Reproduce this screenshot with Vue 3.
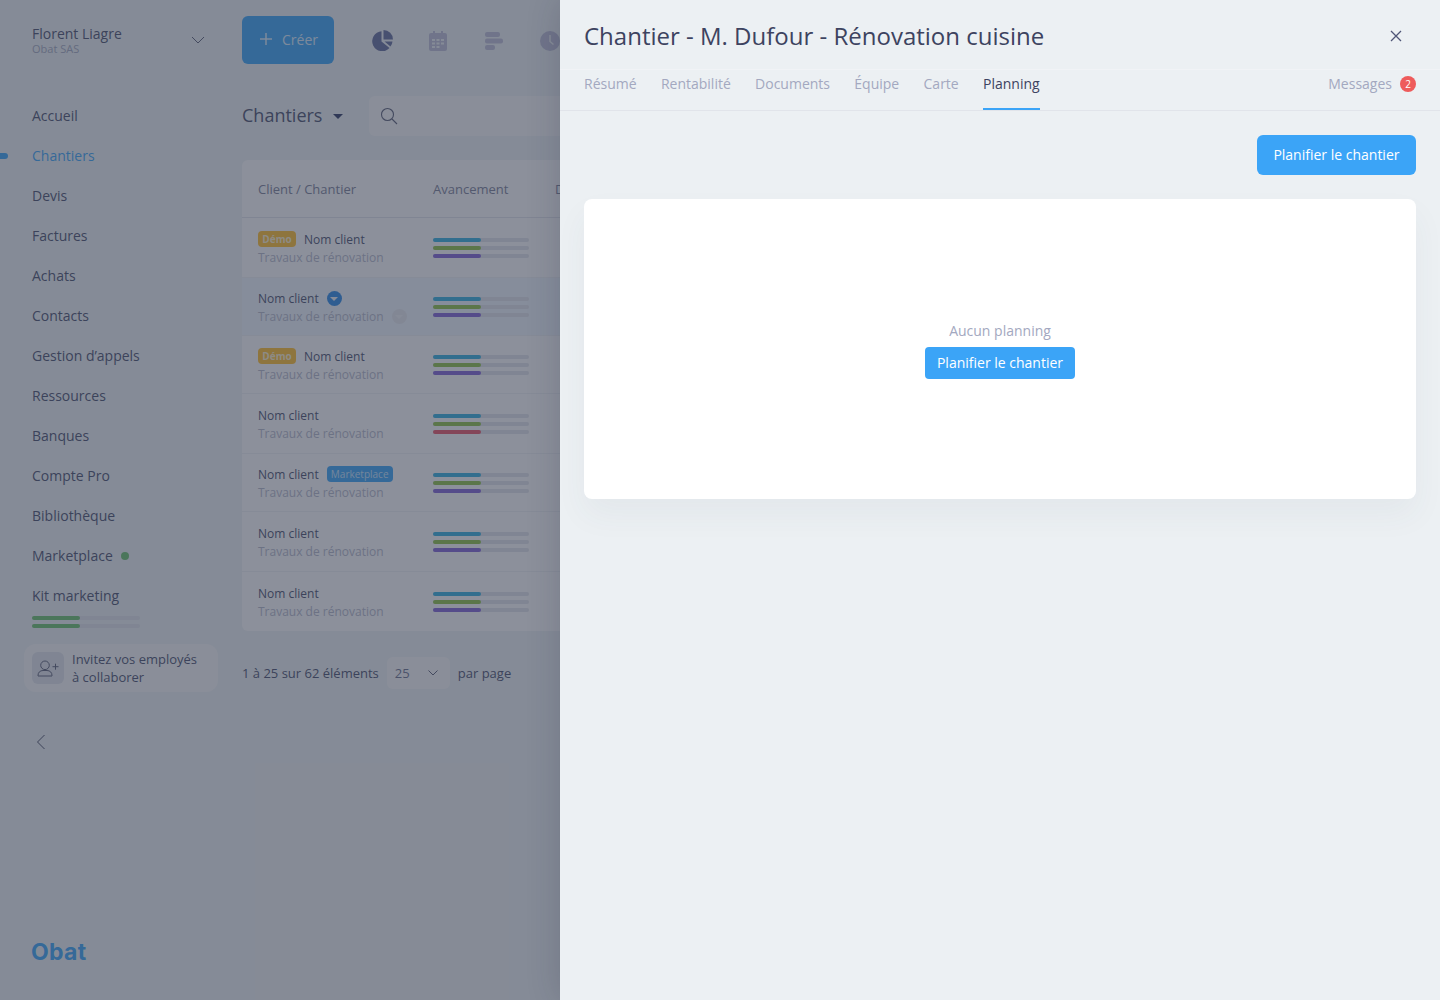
<script setup>
const navItems = [
  { label: 'Accueil' },
  { label: 'Chantiers', active: true },
  { label: 'Devis' },
  { label: 'Factures' },
  { label: 'Achats' },
  { label: 'Contacts' },
  { label: 'Gestion d’appels' },
  { label: 'Ressources' },
  { label: 'Banques' },
  { label: 'Compte Pro' },
  { label: 'Bibliothèque' },
  { label: 'Marketplace', dot: true },
  { label: 'Kit marketing' },
]

const rows = [
  { height: 60, demo: true },
  { height: 58, hover: true },
  { height: 58, demo: true },
  { height: 60, late: true },
  { height: 58, marketplace: true },
  { height: 60 },
  { height: 59 },
]

const tabs = ['Résumé', 'Rentabilité', 'Documents', 'Équipe', 'Carte', 'Planning']
</script>

<template>
  <div class="page">
    <aside class="sidebar">
      <div class="account">
        <div>
          <div class="accountName">Florent Liagre</div>
          <div class="accountCompany">Obat SAS</div>
        </div>
        <svg class="accountChevron" width="14" height="8" viewBox="0 0 14 8" fill="none">
          <path d="M1 1l6 6 6-6" stroke="#5b6079" stroke-width="1" />
        </svg>
      </div>

      <nav class="nav">
        <a v-for="item in navItems" :key="item.label" class="navItem" :class="{ active: item.active }">
          <span v-if="item.active" class="navMarker"></span>
          {{ item.label }}
          <span v-if="item.dot" class="navDot"></span>
        </a>
      </nav>

      <div class="kitBars">
        <div class="kitBar"><span></span></div>
        <div class="kitBar"><span></span></div>
      </div>

      <div class="invite">
        <div class="inviteIcon">
          <svg width="24" height="18" viewBox="0 0 24 18" fill="none" stroke="#5b6079" stroke-width="1">
            <circle cx="9" cy="6.300" r="4.300" />
            <path d="M2 17v-.5c0-3 2-5 5-5h4c3 0 5 2 5 5v.5z" />
            <path d="M16.500 7.700h6M19.500 4.700v6" />
          </svg>
        </div>
        <div>Invitez vos employés<br />à collaborer</div>
      </div>

      <svg class="collapse" width="10" height="16" viewBox="0 0 10 16" fill="none">
        <path d="M8.500 1L1.500 8l7 7" stroke="#4a4f6c" stroke-width="1" />
      </svg>

      <div class="logo">Obat</div>
    </aside>

    <main class="main">
      <header class="toolbar">
        <button class="createBtn">
          <svg width="12" height="12" viewBox="0 0 12 12" fill="none">
            <path d="M6 0v12M0 6h12" stroke="#d8ecfd" stroke-width="1.500" />
          </svg>
          Créer
        </button>
        <div class="toolIcons">
          <svg width="22" height="21" viewBox="0 0 22 21" fill="#636d9e">
            <path d="M10.500 1.200A10 10 0 1 0 18.500 18L10.500 11.500z" />
            <path d="M12.500 0A9.500 9.500 0 0 1 22 9.500H12.500z" />
            <path d="M13.500 11.500H21.500A10 10 0 0 1 19.500 16.500z" />
          </svg>
          <svg class="calendarIcon" width="18" height="20" viewBox="0 0 18 20" fill="#bcbdd7">
            <path fill-rule="evenodd" d="M4 0h2v2h6V0h2v2h2a2 2 0 0 1 2 2v14a2 2 0 0 1-2 2H2a2 2 0 0 1-2-2V4a2 2 0 0 1 2-2h2zM3 8v2h3V8zm4.500 0v2h3V8zM12 8v2h3V8zm-9 3.500v2h3v-2zm4.500 0v2h3v-2zm4.500 0v2h3v-2zM3 15v2h3v-2zm4.500 0v2h3v-2z" />
          </svg>
          <svg width="19" height="18" viewBox="0 0 19 18" fill="#bcbdd7">
            <rect x="1" y="0" width="15" height="5" rx="2" />
            <rect x="1" y="6.500" width="18" height="5" rx="2" />
            <rect x="1" y="13" width="10" height="5" rx="2" />
          </svg>
          <svg width="20" height="20" viewBox="0 0 20 20">
            <circle cx="10" cy="10" r="10" fill="#bcbdd7" />
            <path d="M10 4v6.500l3.500 3" stroke="#edf0f4" stroke-width="1.500" fill="none" />
          </svg>
        </div>
      </header>

      <div class="titleRow">
        <h2 class="pageTitle">Chantiers</h2>
        <span class="titleCaret"></span>
        <div class="search">
          <svg width="18" height="18" viewBox="0 0 18 18" fill="none" stroke="#5b6079" stroke-width="1.100">
            <circle cx="7.500" cy="7.500" r="6" />
            <path d="M12 12l5 5" />
          </svg>
        </div>
      </div>

      <section class="table">
        <div class="tableHead">
          <span class="colClient">Client / Chantier</span>
          <span class="colProgress">Avancement</span>
          <span>Date</span>
        </div>
        <div
          v-for="(row, index) in rows"
          :key="index"
          class="tableRow"
          :class="{ hover: row.hover }"
          :style="{ height: row.height + 'px' }"
        >
          <div class="colClient">
            <div class="clientLine">
              <span v-if="row.demo" class="tag tagDemo">Démo</span>
              <span>Nom client</span>
              <span v-if="row.hover" class="rowCaret"></span>
              <span v-if="row.marketplace" class="tag tagMarket">Marketplace</span>
            </div>
            <div class="workLine">
              Travaux de rénovation
              <span v-if="row.hover" class="rowCaret muted"></span>
            </div>
          </div>
          <div class="colProgress bars">
            <div class="bar"><span class="cyan"></span></div>
            <div class="bar"><span class="green"></span></div>
            <div class="bar"><span :class="row.late ? 'red' : 'purple'"></span></div>
          </div>
        </div>
      </section>

      <div class="pagination">
        <span>1 à 25 sur 62 éléments</span>
        <div class="perPage">
          25
          <svg width="10" height="6" viewBox="0 0 10 6" fill="none">
            <path d="M.5.500L5 5 9.500.500" stroke="#5b6079" stroke-width="1" />
          </svg>
        </div>
        <span>par page</span>
      </div>
    </main>

    <div class="overlay"></div>

    <div class="panel">
      <div class="panelHead">
        <h1 class="panelTitle">Chantier - M. Dufour - Rénovation cuisine</h1>
        <svg class="closeIcon" width="12" height="12" viewBox="0 0 12 12" fill="none">
          <path d="M1 1l10 10M11 1L1 11" stroke="#4f5577" stroke-width="1.300" />
        </svg>
      </div>

      <div class="tabs">
        <a v-for="tab in tabs" :key="tab" class="tab" :class="{ active: tab === 'Planning' }">{{ tab }}</a>
        <a class="tab messages">Messages <span class="badge">2</span></a>
      </div>

      <div class="panelBody">
        <div class="actions">
          <button class="primaryBtn">Planifier le chantier</button>
        </div>
        <div class="emptyCard">
          <div class="emptyText">Aucun planning</div>
          <button class="primaryBtn small">Planifier le chantier</button>
        </div>
      </div>
    </div>
  </div>
</template>

<style scoped>
.page {
  position: relative;
  display: flex;
  width: 1440px;
  height: 1000px;
  overflow: hidden;
  background: #ecf0f3;
  color: #4a5170;
  font-family: "Open Sans", sans-serif;
  font-size: 14px;
}

.sidebar {
  position: relative;
  flex: none;
  width: 242px;
}
.account {
  display: flex;
  align-items: center;
  justify-content: space-between;
  height: 96px;
  padding: 0 37px 16px 32px;
  box-sizing: border-box;
}
.accountName {
  font-size: 14px;
  line-height: 18px;
}
.accountCompany {
  font-size: 11px;
  line-height: 12px;
  color: #a3a8c0;
}
.navItem {
  position: relative;
  display: flex;
  align-items: center;
  height: 40px;
  padding: 0 0 2px 32px;
  box-sizing: border-box;
  font-size: 14px;
}
.navItem.active {
  color: #3ba4f7;
}
.navMarker {
  position: absolute;
  left: 0;
  top: 17px;
  width: 8px;
  height: 6px;
  border-radius: 0 3px 3px 0;
  background: #3ba4f7;
}
.navDot {
  width: 8px;
  height: 8px;
  margin: 2px 0 0 8px;
  border-radius: 50%;
  background: #6cc070;
}
.kitBars {
  display: flex;
  flex-direction: column;
  gap: 4px;
  width: 108px;
  margin: 0 0 16px 32px;
}
.kitBar {
  height: 4px;
  border-radius: 2px;
  background: #dfe2ea;
}
.kitBar span {
  display: block;
  width: 48px;
  height: 4px;
  border-radius: 2px;
  background: #6cc070;
}
.invite {
  display: flex;
  align-items: center;
  gap: 8px;
  width: 194px;
  height: 48px;
  margin-left: 24px;
  padding-left: 8px;
  box-sizing: border-box;
  border-radius: 12px;
  background: #f6f7f9;
  font-size: 13px;
  line-height: 18px;
}
.inviteIcon {
  display: flex;
  align-items: center;
  justify-content: center;
  flex: none;
  width: 32px;
  height: 32px;
  border-radius: 6px;
  background: #dfe2ea;
}
.collapse {
  display: block;
  margin: 42px 0 0 36px;
}
.logo {
  position: absolute;
  left: 31px;
  top: 937px;
  color: #3ba4f7;
  font-family: Inter, sans-serif;
  font-size: 23px;
  font-weight: 700;
  line-height: 30px;
  letter-spacing: 0.3px;
}

.main {
  flex: none;
  width: 1198px;
  padding-right: 24px;
  box-sizing: border-box;
}
.toolbar {
  display: flex;
  align-items: center;
  height: 48px;
  margin-top: 16px;
}
.createBtn {
  display: flex;
  align-items: center;
  gap: 10px;
  width: 92px;
  height: 48px;
  padding: 0 0 2px 18px;
  border: 0;
  border-radius: 6px;
  background: #3ba4f7;
  color: #d8ecfd;
  font: 14px "Open Sans", sans-serif;
}
.toolIcons {
  display: flex;
  align-items: center;
  gap: 37px;
  margin: 1px 0 0 37px;
}
.calendarIcon {
  margin-left: -1px;
}
.titleRow {
  display: flex;
  align-items: center;
  height: 40px;
  margin-top: 32px;
}
.pageTitle {
  margin: 0 0 2px;
  font-size: 18px;
  font-weight: 400;
}
.titleCaret {
  width: 0;
  height: 0;
  margin: 0 0 0 11px;
  border: 5px solid transparent;
  border-top-color: #2f3a66;
  border-bottom: 0;
}
.search {
  display: flex;
  align-items: center;
  flex: 1;
  height: 40px;
  margin-left: 26px;
  padding-left: 11px;
  border-radius: 6px;
  background: #f6f7f9;
}
.table {
  margin-top: 24px;
  border-radius: 6px;
  background: #fbfbfd;
  font-size: 12px;
}
.tableHead {
  display: flex;
  align-items: center;
  height: 58px;
  border-bottom: 1px solid #dfe2ea;
  box-sizing: border-box;
  color: #7c819a;
  font-size: 13px;
}
.colClient {
  flex: none;
  width: 175px;
  padding-left: 16px;
  box-sizing: border-box;
  margin-right: 16px;
}
.tableRow .colClient {
  padding-top: 2px;
}
.colProgress {
  flex: none;
  width: 122px;
}
.tableRow {
  display: flex;
  align-items: center;
  box-sizing: border-box;
  border-bottom: 1px solid #edf0f4;
}
.tableRow:last-child {
  border-bottom: 0;
}
.tableRow.hover {
  background: #eef4fc;
}
.clientLine {
  display: flex;
  align-items: center;
  gap: 8px;
  height: 18px;
  white-space: nowrap;
  font-size: 12px;
}
.workLine {
  display: flex;
  align-items: center;
  gap: 8px;
  height: 18px;
  white-space: nowrap;
  color: #b4b8cb;
}
.tag {
  display: flex;
  align-items: center;
  justify-content: center;
  height: 16px;
  margin-top: -2px;
  border-radius: 4px;
  font-size: 10px;
}
.tagDemo {
  width: 38px;
  background: #ffbe30;
  color: #fdf0cc;
  font-weight: 700;
}
.tagMarket {
  width: 66px;
  background: #3ba4f7;
  color: #c4e3fc;
}
.rowCaret {
  position: relative;
  width: 15px;
  height: 15px;
  border-radius: 50%;
  background: #2e8ae6;
}
.rowCaret::after {
  content: "";
  position: absolute;
  left: 3.500px;
  top: 6px;
  border: 4px solid transparent;
  border-top-color: #edf0f4;
  border-bottom: 0;
}
.rowCaret.muted {
  background: #e4e6ee;
}
.bars {
  display: flex;
  flex-direction: column;
  gap: 4px;
}
.bar {
  width: 96px;
  height: 4px;
  border-radius: 2px;
  background: #dfe2ea;
}
.bar span {
  display: block;
  width: 48px;
  height: 4px;
  border-radius: 2px;
}
.cyan { background: #34b0e0; }
.green { background: #8fc24a; }
.purple { background: #8064d8; }
.red { background: #e8586a; }

.pagination {
  display: flex;
  align-items: center;
  gap: 8px;
  height: 32px;
  margin-top: 26px;
  font-size: 13px;
}
.perPage {
  display: flex;
  align-items: center;
  justify-content: space-between;
  width: 63px;
  height: 32px;
  padding: 0 12px 0 8px;
  box-sizing: border-box;
  border-radius: 6px;
  background: #f6f7f9;
  color: #6c7290;
}

.overlay {
  position: absolute;
  inset: 0;
  background: rgba(50, 56, 74, 0.55);
}

.panel {
  position: absolute;
  top: 0;
  right: 0;
  bottom: 0;
  width: 880px;
  background: #ecf0f3;
  box-shadow: 0 0 32px rgba(30, 36, 60, 0.2);
}
.panelHead {
  display: flex;
  align-items: center;
  justify-content: space-between;
  height: 70px;
  padding: 2px 38px 0 24px;
  box-sizing: border-box;
  border-bottom: 1px solid #f1f3f6;
}
.panelTitle {
  margin: 0;
  color: #3d4360;
  font-size: 24px;
  font-weight: 400;
  line-height: 32px;
}
.tabs {
  display: flex;
  gap: 24.300px;
  height: 41px;
  padding: 0 24px;
  box-sizing: border-box;
  border-bottom: 1px solid #e1e4ea;
}
.tab {
  display: flex;
  align-items: center;
  height: 40px;
  padding-bottom: 12px;
  box-sizing: border-box;
  color: #a3a8c0;
  font-size: 14px;
  line-height: 20px;
}
.tab.active {
  border-bottom: 2px solid #3ba4f7;
  padding-bottom: 10px;
  color: #3d4360;
}
.messages {
  gap: 8px;
  margin-left: auto;
}
.badge {
  display: flex;
  align-items: center;
  justify-content: center;
  width: 16px;
  height: 16px;
  border-radius: 50%;
  background: #ee5b5b;
  color: #fff;
  font-size: 10px;
  line-height: 16px;
}
.panelBody {
  padding: 24px;
}
.actions {
  display: flex;
  justify-content: flex-end;
  margin-bottom: 24px;
}
.primaryBtn {
  height: 40px;
  padding: 0 16.500px 2px;
  border: 0;
  border-radius: 6px;
  background: #3ba4f7;
  color: #fff;
  font: 14px "Open Sans", sans-serif;
}
.primaryBtn.small {
  height: 32px;
  padding: 0 12px 2px;
  border-radius: 4px;
}
.emptyCard {
  display: flex;
  flex-direction: column;
  align-items: center;
  justify-content: center;
  height: 300px;
  padding-top: 2px;
  box-sizing: border-box;
  border-radius: 8px;
  background: #fff;
  box-shadow: 0 16px 32px rgba(60, 70, 100, 0.05);
}
.emptyText {
  margin-bottom: 6px;
  color: #a3a8c0;
  font-size: 14px;
  line-height: 20px;
}
</style>
